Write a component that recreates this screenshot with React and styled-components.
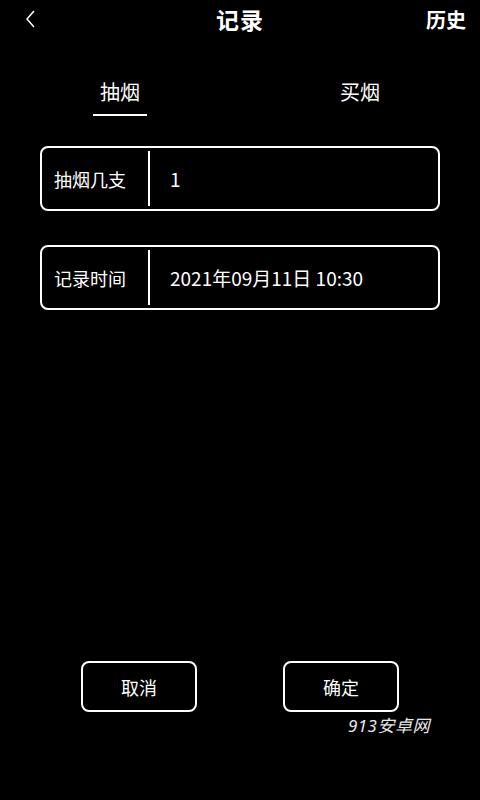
import React, { useState } from "react";
import styled, { createGlobalStyle } from "styled-components";

const Global = createGlobalStyle`
  html, body {
    margin: 0;
    padding: 0;
    background: #000;
  }
  body {
    font-family: "Noto Sans CJK SC", "Noto Sans", sans-serif;
    color: #fff;
  }
`;

const Page = styled.div`
  width: 480px;
  height: 800px;
  background: #000;
  display: flex;
  flex-direction: column;
  overflow: hidden;
`;

const TopBar = styled.div`
  height: 38px;
  display: grid;
  grid-template-columns: 1fr auto 1fr;
  align-items: center;
  padding: 0 14px;
`;

const BackButton = styled.div`
  display: flex;
  align-items: center;
  height: 24px;
  padding-left: 10px;
  cursor: pointer;
`;

const Title = styled.div`
  font-size: 23px;
  font-weight: 700;
  letter-spacing: 1px;
`;

const HistoryLink = styled.div`
  justify-self: end;
  font-size: 20px;
  font-weight: 700;
`;

const Tabs = styled.div`
  display: flex;
  margin-top: 40px;
`;

const Tab = styled.div`
  flex: 1;
  display: flex;
  flex-direction: column;
  align-items: center;
  cursor: pointer;
  font-size: 20px;
  line-height: 28px;
  &::after {
    content: "";
    display: block;
    width: 54px;
    height: 2px;
    margin-top: 8px;
    background: ${({ active }) => (active ? "#fff" : "transparent")};
  }
`;

const Form = styled.div`
  display: flex;
  flex-direction: column;
  gap: 34px;
  margin: 30px 40px 0 40px;
`;

const Field = styled.div`
  height: 65px;
  box-sizing: border-box;
  border: 2px solid #fff;
  border-radius: 8px;
  display: flex;
  align-items: center;
`;

const Label = styled.div`
  width: 106px;
  box-sizing: border-box;
  padding-left: 12px;
  font-size: 18px;
`;

const Divider = styled.div`
  width: 2px;
  align-self: stretch;
  margin: 3px 0;
  background: #fff;
`;

const Value = styled.div`
  padding-left: 20px;
  font-size: 19px;
`;

const Spacer = styled.div`
  flex: 1;
`;

const Actions = styled.div`
  display: flex;
  justify-content: space-between;
  padding: 0 81px 0 81px;
`;

const ActionButton = styled.div`
  width: 116px;
  height: 51px;
  box-sizing: border-box;
  border: 2px solid #fff;
  border-radius: 8px;
  display: flex;
  align-items: center;
  justify-content: center;
  font-size: 18px;
  cursor: pointer;
`;

const Watermark = styled.div`
  align-self: flex-end;
  margin: 0 50px 63px 0;
  font-family: "Noto Sans", "Noto Sans CJK SC", sans-serif;
  font-style: italic;
  font-size: 17px;
  color: #e8e8e8;
  letter-spacing: 0.5px;
`;

export default function App() {
  const [tab, setTab] = useState(0);

  return (
    <Page>
      <Global />
      <TopBar>
        <BackButton>
          <svg width="12" height="20" viewBox="0 0 12 20">
            <path d="M10 2 L3 10 L10 18" fill="none" stroke="#fff" strokeWidth="1.5" />
          </svg>
        </BackButton>
        <Title>记录</Title>
        <HistoryLink>历史</HistoryLink>
      </TopBar>

      <Tabs>
        <Tab active={tab === 0} onClick={() => setTab(0)}>抽烟</Tab>
        <Tab active={tab === 1} onClick={() => setTab(1)}>买烟</Tab>
      </Tabs>

      <Form>
        <Field>
          <Label>抽烟几支</Label>
          <Divider />
          <Value>1</Value>
        </Field>
        <Field>
          <Label>记录时间</Label>
          <Divider />
          <Value>2021年09月11日 10:30</Value>
        </Field>
      </Form>

      <Spacer />

      <Actions>
        <ActionButton>取消</ActionButton>
        <ActionButton>确定</ActionButton>
      </Actions>
      <Watermark>913安卓网</Watermark>
    </Page>
  );
}
